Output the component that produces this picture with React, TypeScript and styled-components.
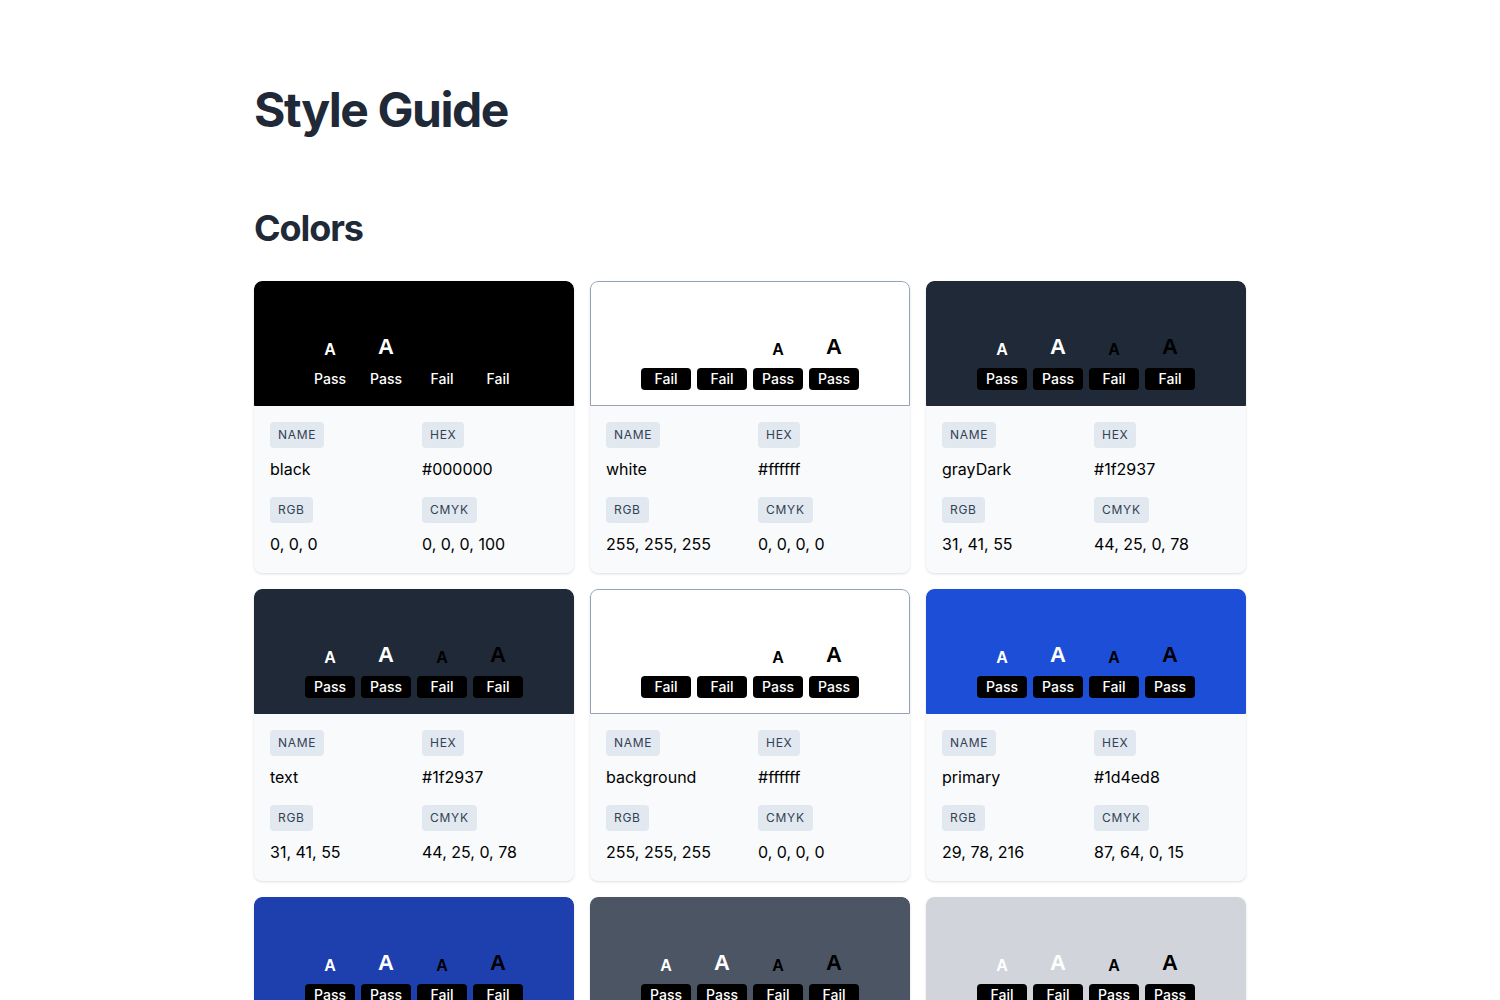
import React from "react";
import styled, { createGlobalStyle } from "styled-components";

const TextFont = `Inter, "Noto Sans", "Liberation Sans", sans-serif`;
const BORDER_GRAY = `#94a3b8`;

const GlobalStyle = createGlobalStyle`
  body {
    margin: 0;
    background: #ffffff;
    font-family: ${TextFont};
    color: #1f2937;
  }
`;

type Result = "Pass" | "Fail";

interface ColorInfo {
  name: string;
  hex: string;
  rgb: string;
  cmyk: string;
  results: [Result, Result, Result, Result];
}

const colors: ColorInfo[] = [
  { name: "black", hex: "#000000", rgb: "0, 0, 0", cmyk: "0, 0, 0, 100", results: ["Pass", "Pass", "Fail", "Fail"] },
  { name: "white", hex: "#ffffff", rgb: "255, 255, 255", cmyk: "0, 0, 0, 0", results: ["Fail", "Fail", "Pass", "Pass"] },
  { name: "grayDark", hex: "#1f2937", rgb: "31, 41, 55", cmyk: "44, 25, 0, 78", results: ["Pass", "Pass", "Fail", "Fail"] },
  { name: "text", hex: "#1f2937", rgb: "31, 41, 55", cmyk: "44, 25, 0, 78", results: ["Pass", "Pass", "Fail", "Fail"] },
  { name: "background", hex: "#ffffff", rgb: "255, 255, 255", cmyk: "0, 0, 0, 0", results: ["Fail", "Fail", "Pass", "Pass"] },
  { name: "primary", hex: "#1d4ed8", rgb: "29, 78, 216", cmyk: "87, 64, 0, 15", results: ["Pass", "Pass", "Fail", "Pass"] },
  { name: "primaryDark", hex: "#1e40af", rgb: "30, 64, 175", cmyk: "83, 63, 0, 31", results: ["Pass", "Pass", "Fail", "Fail"] },
  { name: "gray", hex: "#4b5563", rgb: "75, 85, 99", cmyk: "24, 14, 0, 61", results: ["Pass", "Pass", "Fail", "Fail"] },
  { name: "grayLight", hex: "#d1d5db", rgb: "209, 213, 219", cmyk: "5, 3, 0, 14", results: ["Fail", "Fail", "Pass", "Pass"] },
];

const samples = [
  { color: "#ffffff", large: false },
  { color: "#ffffff", large: true },
  { color: "#000000", large: false },
  { color: "#000000", large: true },
];

const ColorCard: React.FC<{ info: ColorInfo }> = ({ info }) => (
  <Card>
    <Swatch bg={info.hex} bordered={info.hex === "#ffffff"}>
      {samples.map((s, i) => (
        <Sample key={i}>
          <SampleLetter color={s.color} large={s.large}>A</SampleLetter>
          <ResultBadge>{info.results[i]}</ResultBadge>
        </Sample>
      ))}
    </Swatch>
    <Details>
      <Field>
        <FieldLabel>Name</FieldLabel>
        <FieldValue>{info.name}</FieldValue>
      </Field>
      <Field>
        <FieldLabel>Hex</FieldLabel>
        <FieldValue>{info.hex}</FieldValue>
      </Field>
      <Field>
        <FieldLabel>RGB</FieldLabel>
        <FieldValue>{info.rgb}</FieldValue>
      </Field>
      <Field>
        <FieldLabel>CMYK</FieldLabel>
        <FieldValue>{info.cmyk}</FieldValue>
      </Field>
    </Details>
  </Card>
);

const App: React.FC = () => (
  <>
    <GlobalStyle />
    <Page>
      <Title>Style Guide</Title>
      <SectionTitle>Colors</SectionTitle>
      <CardGrid>
        {colors.map((c) => (
          <ColorCard key={c.name} info={c} />
        ))}
      </CardGrid>
    </Page>
  </>
);

const Page = styled.main`
  max-width: 992px;
  margin: 0 auto;
  padding: 86px 0 40px;
`;

const Title = styled.h1`
  margin: 0;
  font-size: 48px;
  line-height: 1;
  font-weight: 700;
  letter-spacing: -0.03em;
  color: #1f2937;
`;

const SectionTitle = styled.h2`
  margin: 76px 0 35px;
  font-size: 36px;
  line-height: 1;
  font-weight: 700;
  letter-spacing: -0.03em;
  color: #1f2937;
`;

const CardGrid = styled.div`
  display: grid;
  grid-template-columns: repeat(3, 320px);
  gap: 16px;
`;

const Card = styled.div`
  border-radius: 8px;
  background: #f8fafc;
  box-shadow: 0 1px 3px rgba(15, 23, 42, 0.1), 0 1px 2px rgba(15, 23, 42, 0.04);
  overflow: hidden;
`;

const Swatch = styled.div<{ bg: string; bordered: boolean }>`
  height: 125px;
  box-sizing: border-box;
  background: ${(p) => p.bg};
  border: 1px solid ${(p) => (p.bordered ? BORDER_GRAY : p.bg)};
  border-radius: 8px 8px 0 0;
  display: flex;
  justify-content: center;
  align-items: flex-end;
  gap: 6px;
  padding-bottom: 15px;
`;

const Sample = styled.div`
  width: 50px;
  display: flex;
  flex-direction: column;
  align-items: center;
`;

const SampleLetter = styled.span<{ color: string; large: boolean }>`
  font-family: "Liberation Sans", Arial, sans-serif;
  font-weight: 700;
  font-size: ${(p) => (p.large ? "22px" : "16px")};
  line-height: 1;
  color: ${(p) => p.color};
  margin-bottom: 10px;
`;

const ResultBadge = styled.span`
  width: 50px;
  height: 22px;
  border-radius: 4px;
  background: #000000;
  color: #ffffff;
  font-size: 14px;
  font-weight: 500;
  line-height: 22px;
  text-align: center;
`;

const Details = styled.div`
  display: grid;
  grid-template-columns: 1fr 1fr;
  column-gap: 16px;
  row-gap: 16px;
  padding: 16px 16px 17px;
`;

const Field = styled.div`
  display: flex;
  flex-direction: column;
  align-items: flex-start;
`;

const FieldLabel = styled.span`
  display: inline-block;
  padding: 4px 8px;
  border-radius: 4px;
  background: #e2e8f0;
  color: #334155;
  font-size: 12px;
  line-height: 18px;
  letter-spacing: 0.06em;
  text-transform: uppercase;
`;

const FieldValue = styled.span`
  margin-top: 9px;
  font-size: 16px;
  line-height: 24px;
  color: #000000;
`;

export default App;
